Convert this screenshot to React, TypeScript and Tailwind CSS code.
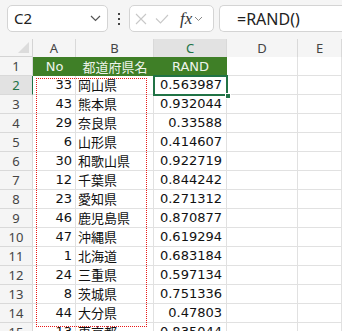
import React from "react";

const rows: [number, string, string][] = [
  [33, "岡山県", "0.563987"],
  [43, "熊本県", "0.932044"],
  [29, "奈良県", "0.33588"],
  [6, "山形県", "0.414607"],
  [30, "和歌山県", "0.922719"],
  [12, "千葉県", "0.844242"],
  [23, "愛知県", "0.271312"],
  [46, "鹿児島県", "0.870877"],
  [47, "沖縄県", "0.619294"],
  [1, "北海道", "0.683184"],
  [24, "三重県", "0.597134"],
  [8, "茨城県", "0.751336"],
  [44, "大分県", "0.47803"],
  [13, "東京都", "0.835044"],
];

const cellFont = { fontFamily: '"DejaVu Sans", "Noto Sans CJK JP", sans-serif' };
const jpFont = { fontFamily: '"Noto Sans CJK JP", sans-serif' };
const uiFont = { fontFamily: '"Noto Sans", "Open Sans", sans-serif' };

const Cell: React.FC<{ className?: string; children?: React.ReactNode; style?: React.CSSProperties }> = ({
  className = "",
  children,
  style,
}) => (
  <div
    style={style}
    className={`h-[19px] border-r border-b border-[#e1e1e1] bg-white text-[13px] leading-[18px] text-[#111] overflow-hidden whitespace-nowrap ${className}`}
  >
    {children}
  </div>
);

const App: React.FC = () => {
  return (
    <div className="w-[342px] h-[331px] overflow-hidden bg-[#f5f5f5]" style={uiFont}>
      {/* Formula bar */}
      <div className="flex items-start pt-[5px] h-[39px]">
        <div className="ml-[7px] w-[101px] h-[27px] bg-white border border-[#d4d4d4] rounded-[5px] flex items-center justify-between pl-[6px] pr-[6px]">
          <span className="text-[15px] text-[#222]">C2</span>
          <svg width="11" height="7" viewBox="0 0 11 7" fill="none" stroke="#555" strokeWidth="1.2">
            <path d="M1 1l4.5 4.5L10 1" />
          </svg>
        </div>
        <div className="w-[21px] h-[27px] flex flex-col items-center justify-center gap-[3px]">
          <span className="w-[2px] h-[2px] bg-[#444]" />
          <span className="w-[2px] h-[2px] bg-[#444]" />
          <span className="w-[2px] h-[2px] bg-[#444]" />
        </div>
        <div className="w-[85px] h-[27px] bg-white border border-[#d4d4d4] rounded-[5px] flex items-center pl-[5px] gap-[8px]">
          <svg width="12" height="12" viewBox="0 0 12 12" stroke="#c8c8c8" strokeWidth="1.1">
            <path d="M1 1l10 10M11 1L1 11" />
          </svg>
          <svg width="14" height="10" viewBox="0 0 14 10" fill="none" stroke="#c8c8c8" strokeWidth="1.1">
            <path d="M1 4.5l4.5 4.5L13 1" />
          </svg>
          <span
            className="ml-[3px] text-[17px] italic text-[#333] leading-none"
            style={{ fontFamily: '"Liberation Serif", serif' }}
          >
            fx
          </span>
          <svg width="9" height="6" viewBox="0 0 9 6" fill="none" stroke="#888" strokeWidth="1" className="-ml-[6px]">
            <path d="M1 1l3.5 3.5L8 1" />
          </svg>
        </div>
        <div className="ml-[5px] flex-1 h-[27px] bg-white border border-r-0 border-[#d4d4d4] rounded-l-[5px] flex items-center pl-[17px]">
          <span className="text-[16px] text-[#222]">=RAND()</span>
        </div>
      </div>

      {/* Grid */}
      <div className="relative">
        <div className="grid grid-cols-[33px_43px_78px_73px_71px_1fr]">
          {/* column headers */}
          <div className="h-[18px] border-r border-b border-[#d4d4d4] bg-[#f5f5f5] flex items-end justify-end pr-[3px] pb-[3px]">
            <svg width="11" height="11" viewBox="0 0 11 11">
              <path d="M11 0V11H0Z" fill="#dcdcdc" />
            </svg>
          </div>
          {["A", "B", "C", "D", "E"].map((c) => (
            <div
              key={c}
              className={`h-[18px] border-r border-[#d9d9d9] text-[13px] leading-[19px] text-center ${
                c === "C" ? "bg-[#e2e2e2] text-[#217346]" : "bg-[#f5f5f5] text-[#444]"
              }`}
            >
              {c}
            </div>
          ))}

          {/* row 1 */}
          <div className="h-[19px] border-r border-b border-[#d9d9d9] bg-[#f5f5f5] text-[13px] leading-[19px] text-center text-[#444]">
            1
          </div>
          <div className="h-[19px] bg-[#3f7f27] text-[#eef4ea] text-[13px] leading-[19px] text-center" style={cellFont}>
            No
          </div>
          <div className="h-[19px] bg-[#3f7f27] text-[#eef4ea] text-[13px] leading-[19px] text-center" style={jpFont}>
            都道府県名
          </div>
          <div className="h-[19px] bg-[#3f7f27] text-[#eef4ea] text-[13px] leading-[19px] text-center" style={cellFont}>
            RAND
          </div>
          <Cell />
          <Cell />

          {rows.map(([no, pref, val], i) => (
            <React.Fragment key={i}>
              <div
                className={`h-[19px] border-r border-b text-[13px] leading-[19px] text-center ${
                  i === 0
                    ? "bg-[#e2e2e2] text-[#217346] border-r-[#217346] border-b-[#d9d9d9]"
                    : "bg-[#f5f5f5] text-[#444] border-[#d9d9d9]"
                }`}
              >
                {i + 2}
              </div>
              <Cell className="text-right pr-[3px]" style={cellFont}>
                {no}
              </Cell>
              <Cell className="pl-[2px]" style={jpFont}>
                {pref}
              </Cell>
              <Cell className="text-right pr-[4px]" style={cellFont}>
                {val}
              </Cell>
              <Cell />
              <Cell />
            </React.Fragment>
          ))}
        </div>

        {/* copy marquee */}
        <div className="absolute left-[36px] top-[39px] w-[111px] h-[249px] border border-dotted border-[#e81818]" />

        {/* active cell */}
        <div className="absolute left-[153px] top-[36px] w-[75px] h-[21px] border-2 border-[#217346]" />
        <div className="absolute left-[225px] top-[54px] w-[6px] h-[6px] bg-[#217346] border border-white" />
      </div>
    </div>
  );
};

export default App;
